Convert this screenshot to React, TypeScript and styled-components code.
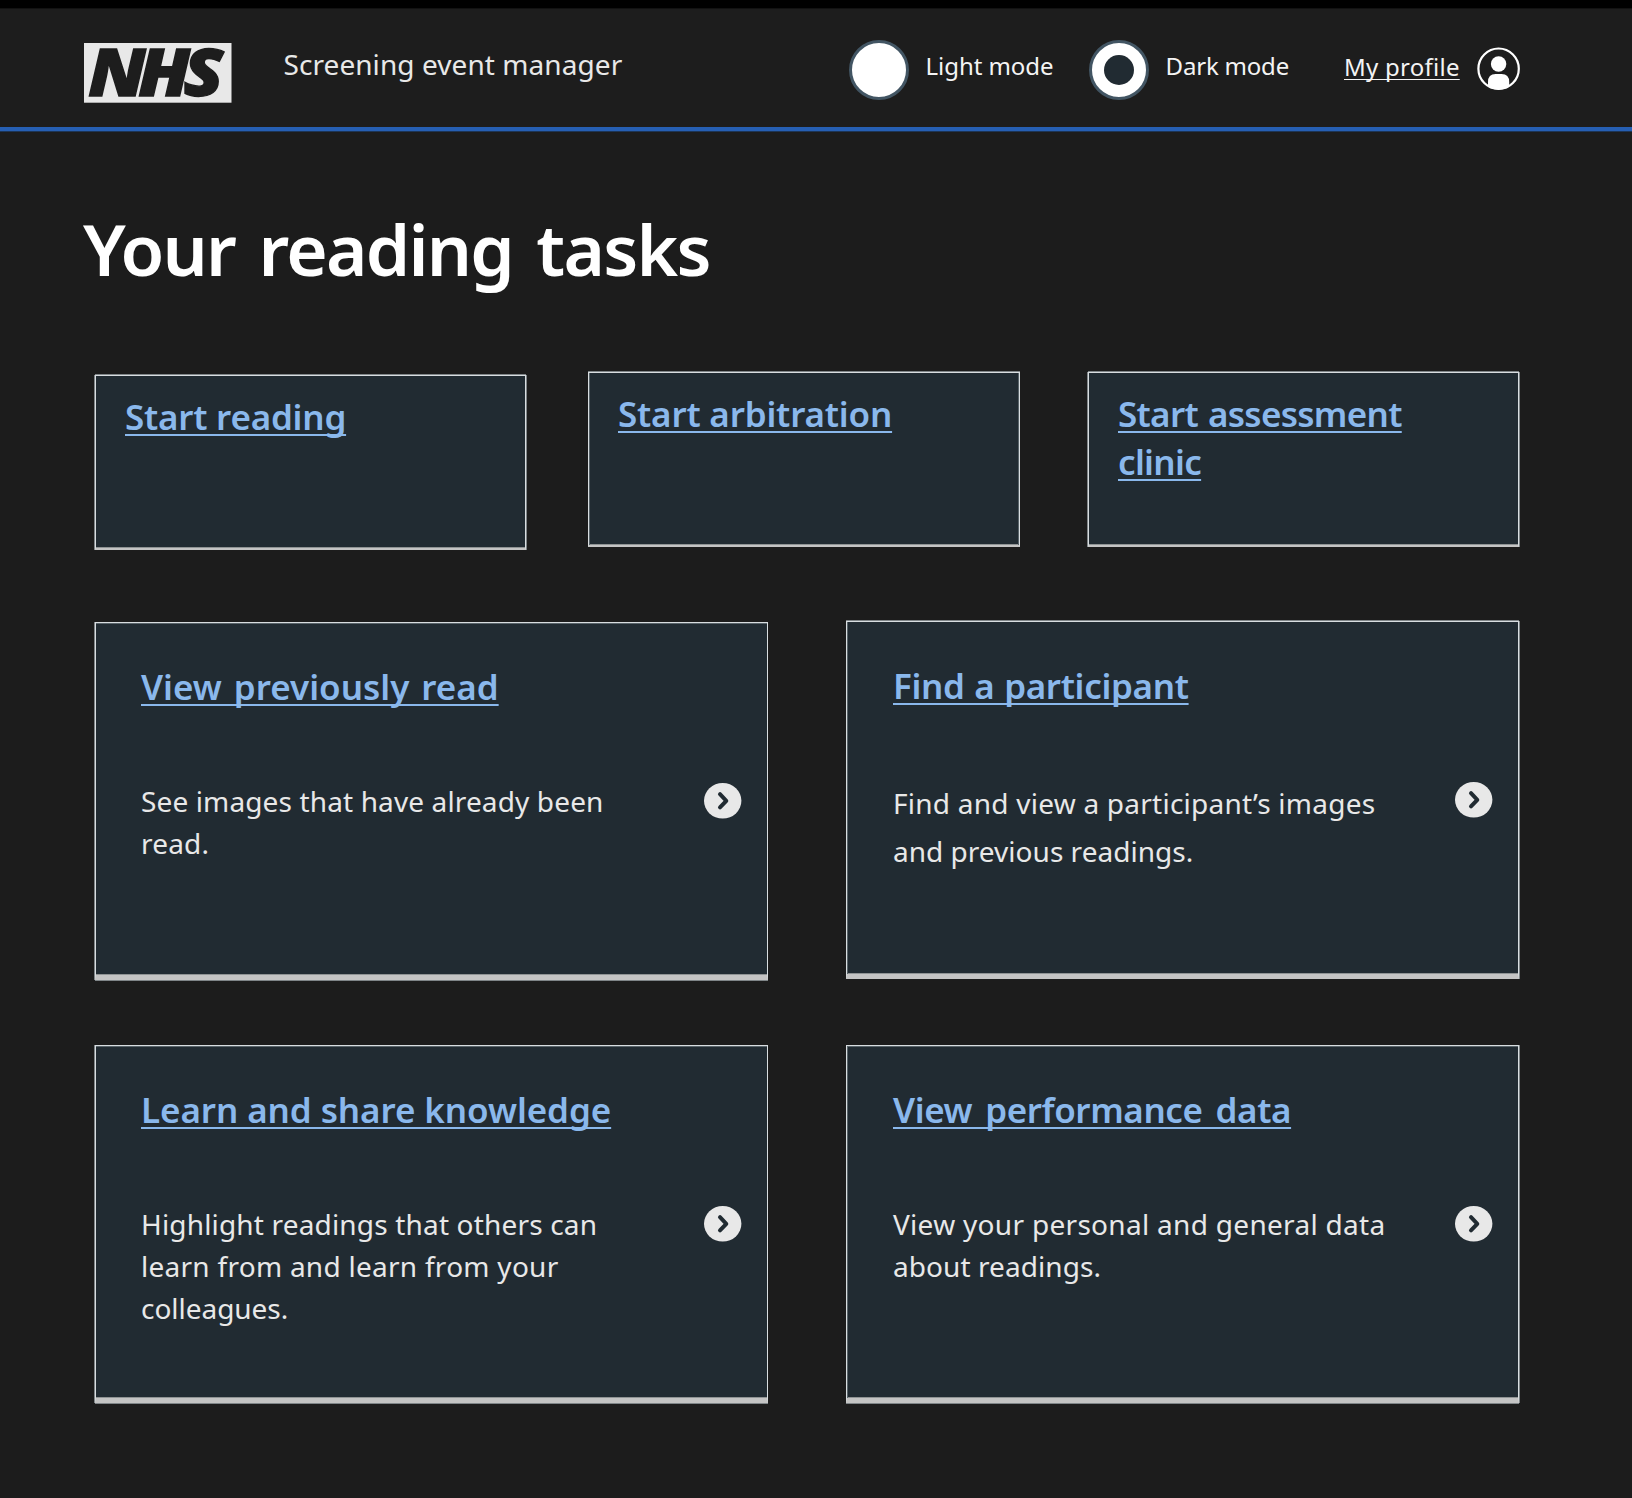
import React from 'react';
import styled, { createGlobalStyle } from 'styled-components';

const GlobalStyle = createGlobalStyle`
  * { box-sizing: border-box; }
  body {
    margin: 0;
    background: #1c1c1c;
    color: #e8e8e8;
    font-family: "Noto Sans", "Open Sans", sans-serif;
  }
  h1, h2, p { margin: 0; }
`;

const Page = styled.div`
  width: 1632px;
  height: 1498px;
  overflow: hidden;
  background: #1c1c1c;
`;

const Header = styled.header`
  display: flex;
  align-items: flex-start;
  height: 132px;
  padding: 35px 0 0 84px;
  border-top: 8px solid #000;
  border-bottom: 1px solid #1d3556;
  background: #1d1d1d;
  box-shadow: inset 0 1px 0 #121212, inset 0 -4px 0 #265fb3;
`;

const Logo = styled.svg`
  flex: none;
  display: block;
`;

const ServiceName = styled.span`
  width: 565.5px;
  margin: 1px 0 0 51.5px;
  font-size: 28px;
  line-height: 40px;
  letter-spacing: 0.07px;
  white-space: nowrap;
`;

const Mode = styled.label`
  display: flex;
  align-items: flex-start;
  width: 240px;
  margin-top: -3px;
  color: #f4f4f4;
`;

const Radio = styled.span`
  display: grid;
  place-items: center;
  flex: none;
  width: 60px;
  height: 60px;
  border: 3px solid #425563;
  border-radius: 50%;
  background: #fff;
`;

const Dot = styled.span`
  width: 30px;
  height: 30px;
  border-radius: 50%;
  background: #212b32;
`;

const ModeName = styled.span<{ $track: number }>`
  margin: 10px 0 0 16.6px;
  font-size: 24px;
  line-height: 32px;
  letter-spacing: ${p => p.$track}px;
  white-space: nowrap;
`;

const Profile = styled.a`
  display: flex;
  align-items: flex-start;
  gap: 17px;
  margin: 4px 0 0 15px;
  color: #f4f4f4;
`;

const ProfileName = styled.span`
  margin-top: 4px;
  font-size: 24px;
  line-height: 32px;
  letter-spacing: 0.26px;
  white-space: nowrap;
  text-decoration: underline;
  text-decoration-thickness: 1px;
  text-underline-offset: 3px;
  text-decoration-skip-ink: none;
`;

const Title = styled.h1`
  margin: 73px 0 0 83px;
  color: #fff;
  font-size: 71px;
  font-weight: 600;
  line-height: 88px;
  letter-spacing: -1.75px;
  word-spacing: 6.6px;
  white-space: nowrap;
`;

const CardRow = styled.div<{ $top: number }>`
  display: flex;
  align-items: flex-start;
  margin: ${p => p.$top}px 0 0 95px;
`;

const Card = styled.section<{ $w: number; $halo: string; $left?: number; $drop?: number }>`
  flex: none;
  width: ${p => p.$w}px;
  margin-left: ${p => p.$left ?? 0}px;
  margin-top: ${p => p.$drop ?? 0}px;
  border: 1px solid #d8dde0;
  background: #212b32;
  box-shadow: ${p => p.$halo};
`;

const StartCard = styled(Card)`
  height: 175px;
  padding: 17px 29px 0;
  border-bottom: 2px solid #c4c4c4;
`;

const TaskCard = styled(Card)<{ $indent: number }>`
  height: 358px;
  padding: 40px 25px 0 ${p => p.$indent}px;
  border-bottom: 5px solid #c4c4c4;
`;

const CardLink = styled.a<{ $track?: number; $word?: number }>`
  display: block;
  color: #8ab8ec;
  font-size: 35px;
  font-weight: 600;
  line-height: 48px;
  letter-spacing: ${p => p.$track ?? 0}px;
  word-spacing: ${p => p.$word ?? 0}px;
  white-space: nowrap;
  text-decoration: underline;
  text-decoration-thickness: 2px;
  text-underline-offset: 4px;
  text-decoration-skip-ink: none;
`;

const Summary = styled.div`
  display: flex;
  justify-content: space-between;
  align-items: flex-start;
  margin-top: 69px;
`;

const Text = styled.p<{ $leading?: number }>`
  font-size: 28px;
  line-height: ${p => p.$leading ?? 42}px;
  white-space: nowrap;
`;

const Line = styled.span<{ $track: number }>`
  display: block;
  letter-spacing: ${p => p.$track}px;
`;

const ArrowIcon = styled.svg`
  flex: none;
  display: block;
  margin-top: 3px;
`;

const Arrow = () => (
  <ArrowIcon width="38" height="36" viewBox="0 0 38 36">
    <ellipse cx="18.7" cy="17.8" rx="18.7" ry="17.8" fill="#e8e8e8" />
    <path
      d="M16 11.2 L22.3 17.8 L16 24.4"
      fill="none"
      stroke="#212b32"
      strokeWidth="4"
      strokeLinecap="round"
      strokeLinejoin="round"
    />
  </ArrowIcon>
);

const outer = (x: number, y: number) => `${x}px ${y}px 0 #7f8588`;
const inner = (x: number, y: number) => `inset ${x}px ${y}px 0 #59646a`;
const base = 'inset 0 -1px 0 #8f9394';

export default function App() {
  return (
    <>
      <GlobalStyle />
      <Page>
        <Header>
          <Logo width="148" height="60" viewBox="0 0 148 60">
            <rect width="147.5" height="59.7" fill="#e8e8e8" />
            <text
              transform="scale(1.12 1)"
              x="3.8 48.4 88.8"
              y="53"
              fill="#1d1d1d"
              stroke="#1d1d1d"
              strokeWidth="1.3"
              fontFamily='"Noto Sans", sans-serif'
              fontStyle="italic"
              fontWeight="900"
              fontSize="65"
            >
              NHS
            </text>
          </Logo>
          <ServiceName>Screening event manager</ServiceName>
          <Mode>
            <Radio />
            <ModeName $track={-0.07}>Light mode</ModeName>
          </Mode>
          <Mode>
            <Radio>
              <Dot />
            </Radio>
            <ModeName $track={-0.2}>Dark mode</ModeName>
          </Mode>
          <Profile>
            <ProfileName>My profile</ProfileName>
            <svg width="43" height="44" viewBox="0 0 43 44">
              <defs>
                <clipPath id="disc">
                  <circle cx="21.6" cy="21.7" r="21" />
                </clipPath>
              </defs>
              <circle cx="21.6" cy="21.7" r="20.2" fill="none" stroke="#fff" strokeWidth="2.2" />
              <circle cx="21.6" cy="17" r="7.7" fill="#fff" />
              <path clipPath="url(#disc)" d="M11 44 V35 Q11 27 18.7 27 H24.5 Q32.2 27 32.2 35 V44 Z" fill="#fff" />
            </svg>
          </Profile>
        </Header>
        <Title>Your reading tasks</Title>
        <CardRow $top={79}>
          <StartCard $w={431} $drop={3} $halo={[outer(-1, 0), outer(0, -1), outer(1, 0), base].join()}>
            <CardLink $track={-0.22}>Start reading</CardLink>
          </StartCard>
          <StartCard $w={432} $left={62} $halo={[inner(1, 0), inner(-1, 0), outer(0, -1), base].join()}>
            <CardLink $track={-0.18}>Start arbitration</CardLink>
          </StartCard>
          <StartCard $w={431} $left={68} $halo={[outer(-1, 0), outer(0, -1), outer(1, 0), base].join()}>
            <CardLink $track={-0.68} $word={1.6}>
              Start assessment
              <br />
              clinic
            </CardLink>
          </StartCard>
        </CardRow>
        <CardRow $top={71}>
          <TaskCard $w={673} $indent={45} $drop={1} $halo={[outer(-1, 0), inner(0, 1), outer(0, 1), base].join()}>
            <CardLink $track={0} $word={2.9}>View previously read</CardLink>
            <Summary>
              <Text>
                <Line $track={0.13}>See images that have already been</Line>
                <Line $track={0.2}>read.</Line>
              </Text>
              <Arrow />
            </Summary>
          </TaskCard>
          <TaskCard $w={673} $left={78} $indent={46} $halo={[inner(1, 0), outer(0, -1), outer(1, 0), base].join()}>
            <CardLink $track={-0.33} $word={0.9}>Find a participant</CardLink>
            <Summary>
              <Text $leading={48}>
                <Line $track={0.24}>Find and view a participant’s images</Line>
                <Line $track={0.02}>and previous readings.</Line>
              </Text>
              <Arrow />
            </Summary>
          </TaskCard>
        </CardRow>
        <CardRow $top={65}>
          <TaskCard $w={673} $indent={45} $halo={[outer(-1, 0), inner(0, 1), outer(0, 1), base].join()}>
            <CardLink $track={-0.08}>Learn and share knowledge</CardLink>
            <Summary>
              <Text>
                <Line $track={0.17}>Highlight readings that others can</Line>
                <Line $track={0.27}>learn from and learn from your</Line>
                <Line $track={-0.03}>colleagues.</Line>
              </Text>
              <Arrow />
            </Summary>
          </TaskCard>
          <TaskCard
            $w={673}
            $left={78}
            $indent={46}
            $halo={[inner(1, 0), inner(0, 1), outer(1, 0), outer(0, 1), base].join()}
          >
            <CardLink $track={-0.4} $word={4.3}>View performance data</CardLink>
            <Summary>
              <Text>
                <Line $track={0.3}>View your personal and general data</Line>
                <Line $track={0.07}>about readings.</Line>
              </Text>
              <Arrow />
            </Summary>
          </TaskCard>
        </CardRow>
      </Page>
    </>
  );
}
